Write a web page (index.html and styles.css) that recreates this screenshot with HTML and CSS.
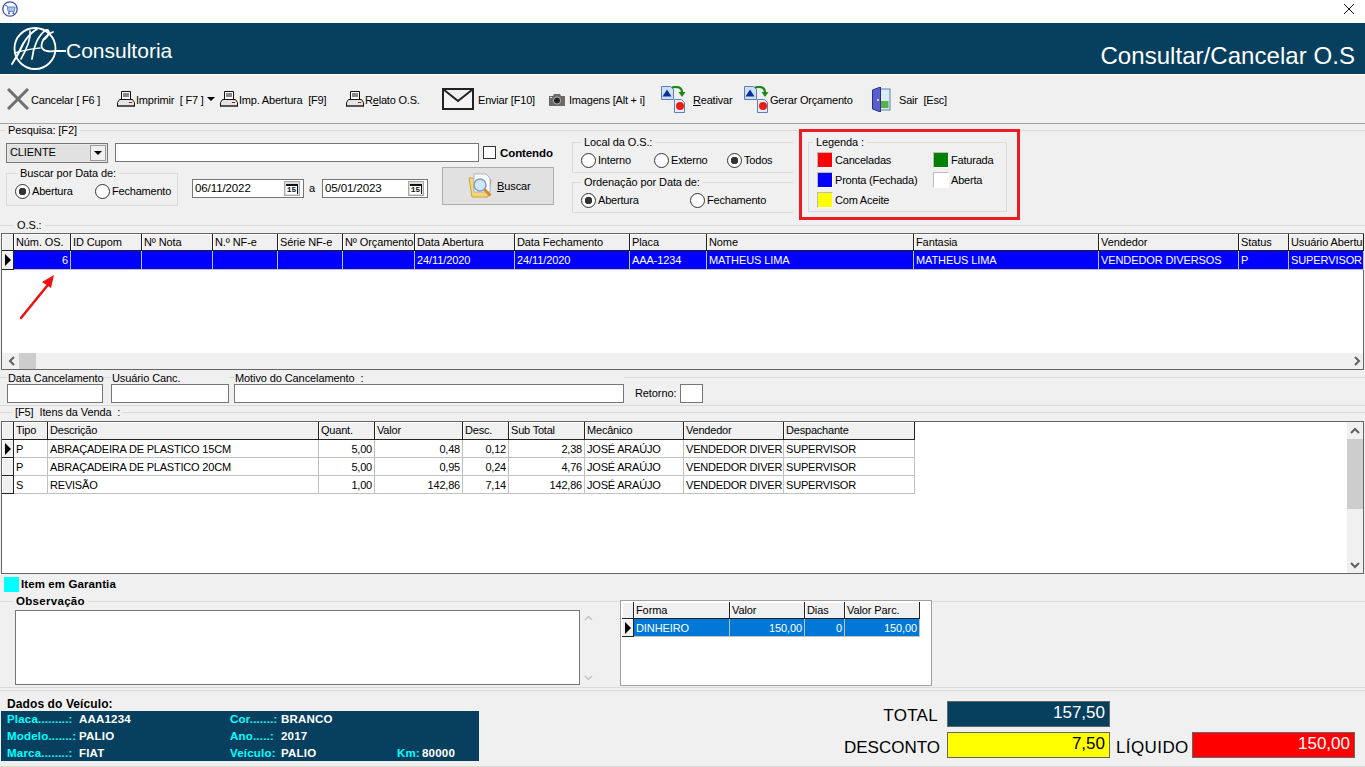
FILE: index.html
```html
<!DOCTYPE html>
<html lang="pt-BR">
<head>
<meta charset="utf-8">
<title>Consultar/Cancelar O.S</title>
<link rel="stylesheet" href="styles.css">
</head>
<body>
<div class="window">
  <div class="titlebar">
    <svg class="app-icon" width="16" height="16" viewBox="0 0 16 16"><circle cx="8" cy="8" r="7.2" fill="#fff" stroke="#3c4fa8" stroke-width="1.3"/><path d="M3 4.500h2l1.200 6h6l1-4.500H5.400" fill="#a9c4ee" stroke="#5f86cf"/><circle cx="7" cy="12.300" r="1" fill="#3c4fa8"/><circle cx="11.400" cy="12.300" r="1" fill="#3c4fa8"/></svg>
    <svg class="close-icon" width="12" height="12" viewBox="0 0 12 12"><path d="M1 1l10 10M11 1L1 11" stroke="#111" stroke-width="1" fill="none"/></svg>
  </div>
  <header class="banner">
    <div class="brand">
      <svg class="logo" width="56" height="46" viewBox="0 0 56 46" fill="none" stroke="#fff" stroke-linecap="round"><circle cx="25" cy="22.500" r="20.500" stroke-width="1.800"/><path d="M2 38 C6 32 10 25 13 18 C17 11 22 6 27 3" stroke-width="2"/><path d="M20 5 C21 13 15 26 11 33" stroke-width="1.600"/><path d="M5 27 C13 24 22 23 30 22" stroke-width="1.400"/><path d="M22 33 C23 22 28 9 36 4 C41 3 39 11 33 14" stroke-width="1.800"/><path d="M43 6 C35 9 30 17 32 22 C35 27 42 25 47 25 L56 25" stroke-width="1.800"/></svg>
      <span class="brand-name">Consultoria</span>
    </div>
    <div class="page-title">Consultar/Cancelar O.S</div>
  </header>

  <nav class="toolbar">
    <div class="tool"><svg width="22" height="22" viewBox="0 0 22 22"><path d="M1 1l20 20M21 1L1 21" stroke="#6f6f6f" stroke-width="3" fill="none"/></svg><span>Cancelar [ F6 ]</span></div>
    <div class="tool tool-print"><svg width="18" height="17" viewBox="0 0 18 17"><use href="#printer"/></svg><span>Imprimir&nbsp; [ F7 ]</span><i class="caret"></i></div>
    <div class="tool tool-print"><svg width="18" height="17" viewBox="0 0 18 17"><use href="#printer"/></svg><span>Imp. Abertura&nbsp; [F9]</span></div>
    <div class="tool tool-print"><svg width="18" height="17" viewBox="0 0 18 17"><use href="#printer"/></svg><span>R<u>e</u>lato O.S.</span></div>
    <div class="tool tool-mail"><svg width="32" height="22" viewBox="0 0 32 22"><path d="M1 1h30v20H1zM1.500 1.500L16 13 30.500 1.500" fill="#f4f4f4" stroke="#222" stroke-width="2"/></svg><span>Enviar [F10]</span></div>
    <div class="tool tool-cam"><svg width="16" height="13" viewBox="0 0 16 13"><path d="M0 3h4l1-2h6l1 2h4v10H0z" fill="#6a6a6a"/><circle cx="8" cy="7.500" r="3.600" fill="#222" stroke="#bbb"/><rect x="1" y="4" width="2" height="1" fill="#ddd"/></svg><span>Imagens [Alt + i]</span></div>
    <div class="tool tool-doc"><svg width="25" height="27" viewBox="0 0 25 27"><use href="#docs"/></svg><span><u>R</u>eativar</span></div>
    <div class="tool tool-gerar"><svg width="25" height="27" viewBox="0 0 25 27"><use href="#docs"/></svg><span>Gerar Orçamento</span></div>
    <div class="tool tool-exit"><svg width="21" height="25" viewBox="0 0 21 25"><rect x="9" y="2" width="11" height="21" fill="#d8ecf2" stroke="#5f7fa8"/><rect x="10.500" y="14" width="8" height="7" fill="#58b04a"/><path d="M2.500 3l8-3v25l-8-3z" fill="#5a5fd0" stroke="#2a2f80"/><circle cx="8" cy="13" r="0.900" fill="#fff"/></svg><span>Sair&nbsp; [Esc]</span></div>
  </nav>

  <svg class="defs" width="0" height="0">
    <defs>
      <g id="printer">
        <path d="M4.500 0.500h9v8h-9z" fill="#fff" stroke="#111"/><path d="M6 3h6M6 5h6" stroke="#111"/>
        <path d="M2.500 8.500h13l2 3v4h-17v-4z" fill="#e4e4e4" stroke="#111"/><rect x="1" y="14" width="16" height="2" fill="#555"/><rect x="12" y="11" width="3" height="1" fill="#d00"/>
      </g>
      <g id="docs">
        <path d="M0.500 0.500h9l3 3v10H0.500z" fill="#cfe0f5" stroke="#5c7fb8"/><path d="M1.500 10.500l4.500-7 4.500 7z" fill="#0c2f9e"/>
        <path d="M13.500 13.500h7l3 3v10h-10z" fill="#e4eefb" stroke="#5c7fb8"/><circle cx="19" cy="20" r="4" fill="#f01b0c"/>
        <path d="M11 1.500c6-1.500 10 0 10 5" stroke="#1a8a14" stroke-width="2.200" fill="none"/><path d="M17.500 6h7l-3.500 5z" fill="#1a8a14"/>
      </g>
    </defs>
  </svg>

  <fieldset class="group search">
    <legend>Pesquisa: [F2]</legend>
    <div class="search-body">
      <div class="search-main">
        <div class="search-line">
          <div class="combo"><span class="combo-text">CLIENTE</span><span class="combo-btn"><i class="caret"></i></span></div>
          <div class="field search-input"></div>
          <span class="check"></span><b class="contendo">Contendo</b>
        </div>
        <div class="search-line2">
          <fieldset class="box box-data">
            <legend>Buscar por Data de:</legend>
            <div class="radios radios-data">
              <label class="radio on">Abertura</label>
              <label class="radio">Fechamento</label>
            </div>
          </fieldset>
          <div class="date field"><span>06/11/2022</span><span class="cal"><b>15</b></span></div>
          <span class="date-sep">a</span>
          <div class="date date2 field"><span>05/01/2023</span><span class="cal"><b>15</b></span></div>
          <div class="btn-buscar">
            <svg width="28" height="28" viewBox="0 0 28 28"><path d="M2 6h8l2 2h12l-3 17H5z" fill="#f5d778" stroke="#c9a238"/><path d="M7 2h12l4 4v14H7z" fill="#fff" stroke="#9fb5cf"/><circle cx="13" cy="13" r="6" fill="#cfe6f7" stroke="#7f9fc0" stroke-width="1.500"/><path d="M17.500 17.500l6 6" stroke="#d8892f" stroke-width="3"/></svg>
            <span><u>B</u>uscar</span>
          </div>
        </div>
      </div>
      <div class="search-options">
        <fieldset class="box box-opt">
          <legend>Local da O.S.:</legend>
          <div class="radios radios-local">
            <label class="radio">Interno</label>
            <label class="radio">Externo</label>
            <label class="radio on">Todos</label>
          </div>
        </fieldset>
        <fieldset class="box box-opt box-ord">
          <legend>Ordenação por Data de:</legend>
          <div class="radios radios-ord">
            <label class="radio on">Abertura</label>
            <label class="radio">Fechamento</label>
          </div>
        </fieldset>
      </div>
      <div class="highlight">
        <fieldset class="box box-legend">
          <legend>Legenda :</legend>
          <div class="legend-grid">
            <div class="legend-item"><i class="swatch s-red"></i>Canceladas</div>
            <div class="legend-item"><i class="swatch s-green"></i>Faturada</div>
            <div class="legend-item"><i class="swatch s-blue"></i>Pronta (Fechada)</div>
            <div class="legend-item"><i class="swatch s-white"></i>Aberta</div>
            <div class="legend-item"><i class="swatch s-yellow"></i>Com Aceite</div>
          </div>
        </fieldset>
      </div>
    </div>
  </fieldset>

  <fieldset class="group os">
    <legend>O.S.:</legend>
    <div class="grid os-grid">
      <div class="row os-cols head">
        <div class="hc"></div><div class="hc">Núm. OS.</div><div class="hc">ID Cupom</div><div class="hc">Nº Nota</div><div class="hc">N.º NF-e</div><div class="hc">Série NF-e</div><div class="hc">Nº Orçamento</div><div class="hc">Data Abertura</div><div class="hc">Data Fechamento</div><div class="hc">Placa</div><div class="hc">Nome</div><div class="hc">Fantasia</div><div class="hc">Vendedor</div><div class="hc">Status</div><div class="hc">Usuário Abertura</div>
      </div>
      <div class="row os-cols sel blue">
        <div class="hc ind"><i class="tri"></i></div><div class="c r">6</div><div class="c"></div><div class="c"></div><div class="c"></div><div class="c"></div><div class="c"></div><div class="c">24/11/2020</div><div class="c">24/11/2020</div><div class="c">AAA-1234</div><div class="c">MATHEUS LIMA</div><div class="c">MATHEUS LIMA</div><div class="c">VENDEDOR DIVERSOS</div><div class="c">P</div><div class="c">SUPERVISOR</div>
      </div>
      <div class="grid-fill"></div>
      <div class="hscroll">
        <svg width="8" height="10" viewBox="0 0 8 10"><path d="M6 1L2 5l4 4" stroke="#606060" stroke-width="2" fill="none"/></svg>
        <i class="hthumb"></i>
        <svg class="hright" width="8" height="10" viewBox="0 0 8 10"><path d="M2 1l4 4-4 4" stroke="#606060" stroke-width="2" fill="none"/></svg>
      </div>
      <svg class="red-arrow" width="40" height="46" viewBox="0 0 40 46"><path d="M1 43L27 11" stroke="#f01010" stroke-width="2.500" stroke-linecap="round"/><path d="M34 0L31 13 22 7z" fill="#f01010"/></svg>
    </div>
  </fieldset>

  <section class="cancel">
    <div class="cf cf-data"><label>Data Cancelamento</label><div class="field"></div></div>
    <div class="cf cf-user"><label>Usuário Canc.</label><div class="field"></div></div>
    <div class="cf cf-motivo"><label>Motivo do Cancelamento&nbsp; :</label><div class="field"></div></div>
    <span class="retorno">Retorno:</span>
    <div class="field retorno-box"></div>
  </section>

  <fieldset class="group items">
    <legend>[F5]&nbsp; Itens da Venda&nbsp; :</legend>
    <div class="grid items-grid">
      <div class="items-table">
        <div class="row it-cols head">
          <div class="hc"></div><div class="hc">Tipo</div><div class="hc">Descrição</div><div class="hc">Quant.</div><div class="hc">Valor</div><div class="hc">Desc.</div><div class="hc">Sub Total</div><div class="hc">Mecânico</div><div class="hc">Vendedor</div><div class="hc">Despachante</div>
        </div>
        <div class="row it-cols line">
          <div class="hc ind"><i class="tri"></i></div><div class="c">P</div><div class="c">ABRAÇADEIRA DE PLASTICO 15CM</div><div class="c r">5,00</div><div class="c r">0,48</div><div class="c r">0,12</div><div class="c r">2,38</div><div class="c">JOSÉ ARAÚJO</div><div class="c">VENDEDOR DIVER</div><div class="c">SUPERVISOR</div>
        </div>
        <div class="row it-cols line">
          <div class="hc ind"></div><div class="c">P</div><div class="c">ABRAÇADEIRA DE PLASTICO 20CM</div><div class="c r">5,00</div><div class="c r">0,95</div><div class="c r">0,24</div><div class="c r">4,76</div><div class="c">JOSÉ ARAÚJO</div><div class="c">VENDEDOR DIVER</div><div class="c">SUPERVISOR</div>
        </div>
        <div class="row it-cols line">
          <div class="hc ind"></div><div class="c">S</div><div class="c">REVISÃO</div><div class="c r">1,00</div><div class="c r">142,86</div><div class="c r">7,14</div><div class="c r">142,86</div><div class="c">JOSÉ ARAÚJO</div><div class="c">VENDEDOR DIVER</div><div class="c">SUPERVISOR</div>
        </div>
      </div>
      <div class="vscroll">
        <svg width="10" height="8" viewBox="0 0 10 8"><path d="M1 6l4-4 4 4" stroke="#606060" stroke-width="2" fill="none"/></svg>
        <i class="vthumb"></i>
        <svg class="vdown" width="10" height="8" viewBox="0 0 10 8"><path d="M1 2l4 4 4-4" stroke="#606060" stroke-width="2" fill="none"/></svg>
      </div>
    </div>
  </fieldset>

  <div class="garantia"><i class="swatch-cyan"></i><b>Item em Garantia</b></div>

  <fieldset class="group obs">
    <legend>Observação</legend>
    <div class="obs-body">
      <div class="field obs-text"></div>
      <div class="obs-scroll">
        <svg width="9" height="7" viewBox="0 0 9 7"><path d="M1 5l3.500-3.500L8 5" stroke="#c4c4c4" stroke-width="1.500" fill="none"/></svg>
        <svg width="9" height="7" viewBox="0 0 9 7"><path d="M1 2l3.500 3.500L8 2" stroke="#c4c4c4" stroke-width="1.500" fill="none"/></svg>
      </div>
      <div class="pay">
        <div class="row pay-cols head">
          <div class="hc"></div><div class="hc">Forma</div><div class="hc">Valor</div><div class="hc">Dias</div><div class="hc">Valor Parc.</div>
        </div>
        <div class="row pay-cols sel azure">
          <div class="hc ind"><i class="tri"></i></div><div class="c">DINHEIRO</div><div class="c r">150,00</div><div class="c r">0</div><div class="c r">150,00</div>
        </div>
      </div>
    </div>
  </fieldset>

  <footer class="bottom">
    <div class="vehicle">
      <b class="vehicle-title">Dados do Veículo:</b>
      <div class="vehicle-box">
        <span class="k">Placa.........:</span><span class="v">AAA1234</span><span class="k">Cor.......:</span><span class="v">BRANCO</span><span></span><span></span>
        <span class="k">Modelo.......:</span><span class="v">PALIO</span><span class="k">Ano.....:</span><span class="v">2017</span><span></span><span></span>
        <span class="k">Marca........:</span><span class="v">FIAT</span><span class="k">Veículo:</span><span class="v">PALIO</span><span class="k">Km:</span><span class="v">80000</span>
      </div>
    </div>
    <div class="totals">
      <span class="t-label t-total">TOTAL</span><div class="t-val navy">157,50</div><span></span><span></span>
      <span class="t-label t-desc">DESCONTO</span><div class="t-val yellow">7,50</div><span class="t-label t-liq">LÍQUIDO</span><div class="t-val red">150,00</div>
    </div>
  </footer>
</div>
</body>
</html>
```
FILE: styles.css
```css
* { box-sizing: border-box; }
html, body { margin: 0; padding: 0; }
body { width: 1365px; height: 767px; overflow: hidden; background: #f0f0f0; color: #000; font: 11px/13px "Liberation Sans", Arial, sans-serif; letter-spacing: -0.1px; }
.window { display: flex; flex-direction: column; width: 1365px; height: 767px; overflow: hidden; }
.defs { display: block; height: 0; }
u { text-decoration: underline; }

.titlebar { display: flex; align-items: center; justify-content: space-between; height: 23px; padding: 0 10px 5px 2px; background: #fff; flex: none; }
.banner { display: flex; justify-content: space-between; height: 52px; background: #073f5e; border-bottom: 1px solid #fff; color: #fff; padding: 0 10px 0 10px; flex: none; letter-spacing: 0; }
.brand { display: flex; align-items: center; }
.brand-name { font-size: 21px; line-height: 24px; margin-top: 5px; }
.page-title { font-size: 24px; line-height: 28px; margin-top: 19px; letter-spacing: 0.05px; }

.toolbar { display: grid; grid-template-columns: 110px 103px 126px 96px 107px 112px 83px 126px 90px; height: 49px; padding-left: 7px; border-bottom: 1px solid #a0a0a0; flex: none; align-items: center; letter-spacing: -0.2px; }
.tool { display: flex; align-items: center; gap: 2px; white-space: nowrap; }
.tool span { padding-top: 2px; }
.tool-print { gap: 1px; }
.tool-mail { gap: 4px; }
.tool-cam { gap: 4px; }
.tool-doc { gap: 7px; }
.tool-gerar { gap: 1px; }
.tool-exit { gap: 8px; }
.caret { display: inline-block; width: 0; height: 0; border-left: 4px solid transparent; border-right: 4px solid transparent; border-top: 4px solid #000; margin-left: 2px; }

fieldset { margin: 0; padding: 0; min-width: 0; }
.group { border: 0; border-top: 1px solid #dadada; flex: none; }
.group > legend { margin-left: 5px; padding: 0 3px; height: 13px; }
.box { border: 1px solid #dadada; }
.box > legend { padding: 0 3px; height: 13px; margin-left: 8px; }

.search { height: 94px; }
.search-body { display: flex; padding-left: 6px; }
.search-main { width: 549px; padding-top: 6px; flex: none; }
.search-line { display: flex; align-items: center; height: 19px; }
.combo { display: flex; justify-content: space-between; width: 102px; height: 20px; background: #e1e1e1; border: 1px solid #767676; box-shadow: inset 0 0 0 1px #e8e8e8; padding-left: 3px; align-items: center; }
.combo-btn { display: flex; align-items: center; justify-content: center; width: 16px; height: 16px; background: #efefef; border: 1px solid #9a9a9a; margin-right: 1px; }
.combo-btn .caret { margin: 0; }
.field { background: #fff; border: 1px solid #767676; }
.search-input { width: 364px; height: 19px; margin-left: 7px; }
.check { width: 13px; height: 13px; border: 1px solid #333; background: #fff; margin-left: 4px; }
.contendo { margin: 1px 0 0 4px; font-size: 11.500px; }
.search-line2 { display: flex; align-items: flex-start; margin-top: 5px; }
.box-data { width: 172px; height: 39px; }
.box-data > legend { margin-left: 10px; }
.radios { display: grid; }
.radios-data { grid-template-columns: 80px auto; padding: 4px 0 0 8px; }
.radio { display: flex; align-items: center; gap: 2px; white-space: nowrap; height: 14px; letter-spacing: -0.2px; }
.radio::before { content: ""; width: 13px; height: 13px; border-radius: 50%; border: 1px solid #333; background: #fff; flex: none; }
.radio.on::before { background: radial-gradient(circle, #333 0 3.500px, #fff 4px); }
.date { display: flex; align-items: center; justify-content: space-between; width: 112px; height: 19px; margin: 12px 0 0 14px; padding: 0 3px 0 2px; font-size: 11.500px; }
.date2 { width: 106px; margin-left: 0; }
.date-sep { margin: 15px 7px 0 5px; }
.cal { display: flex; align-items: center; justify-content: center; width: 16px; height: 15px; background: #dcdcdc; border: 1px solid #a8a8a8; }
.cal b { border-top: 2px solid #111; border-right: 1px solid #111; font: bold 8px/8px "Liberation Mono", monospace; color: #111; padding: 0 1px; background: #fff; }
.btn-buscar { display: flex; align-items: center; gap: 2px; width: 112px; height: 38px; margin-left: 14px; padding-left: 24px; background: #e1e1e1; border: 1px solid #adadad; }

.search-options { width: 218px; margin: -1px 0 0 17px; flex: none; }
.box-opt { width: 221px; height: 37px; border-right: 0; }
.box-ord { margin-top: 3px; }
.radios-local { grid-template-columns: 73px 73px auto; padding: 4px 0 0 8px; }
.radios-ord { grid-template-columns: 109px auto; padding: 4px 0 0 8px; }

.highlight { width: 221px; height: 91px; margin: -8px 0 0 9px; padding: 4px 0 0 6px; border: 3px solid #ed1c24; flex: none; }
.box-legend { width: 199px; height: 76px; }
.box-legend > legend { margin-left: 4px; }
.legend-grid { display: grid; grid-template-columns: 116px auto; grid-auto-rows: 20px; padding: 1px 0 0 8px; }
.legend-item { display: flex; align-items: center; gap: 2px; white-space: nowrap; letter-spacing: -0.2px; }
.swatch { width: 16px; height: 16px; border: 1px solid; border-color: #bbb #fff #fff #bbb; flex: none; }
.s-red { background: #f00; }
.s-green { background: #008000; }
.s-blue { background: #00f; }
.s-white { background: #fff; }
.s-yellow { background: #ff0; }

.os { height: 152px; margin-top: 1px; }
.os > legend { margin-left: 14px; }
.grid { display: flex; flex-direction: column; position: relative; margin: 1px 1px 0; border: 1px solid #666; background: #fff; height: 137px; }
.row { display: grid; flex: none; }
.os-cols { grid-template-columns: 12px 57px 71px 71px 65px 65px 72px 100px 115px 77px 207px 185px 140px 50px 75px; }
.head { height: 17px; }
.hc { background: #f0f0f0; border-right: 1px solid #222; border-bottom: 1px solid #222; box-shadow: inset 1px 1px #fff; padding: 2px 2px 0; white-space: nowrap; overflow: hidden; }
.ind { display: flex; align-items: center; justify-content: center; padding: 0; }
.tri { width: 0; height: 0; border-top: 6px solid transparent; border-bottom: 6px solid transparent; border-left: 6px solid #000; }
.c { padding: 3px 2px 0; border-right: 1px solid #c0c0c0; border-bottom: 1px solid #c0c0c0; white-space: nowrap; overflow: hidden; }
.r { text-align: right; }
.sel { height: 19px; color: #fff; }
.blue .c { background: #00f; }
.azure .c { background: #0078d7; }
.grid-fill { flex: 1; }
.hscroll { display: flex; align-items: center; height: 16px; background: #f0f0f0; padding-left: 6px; flex: none; }
.hthumb { width: 17px; height: 16px; background: #cdcdcd; margin-left: 3px; }
.hright { margin-left: auto; margin-right: 2px; }
.red-arrow { position: absolute; left: 18px; top: 41px; }

.cancel { display: flex; align-items: flex-start; height: 29px; margin-top: 6px; border-top: 1px solid #dadada; border-bottom: 1px solid #dadada; padding-left: 7px; flex: none; }
.cf { display: flex; flex-direction: column; margin-top: -7px; }
.cf label { height: 13px; padding: 1px 0 0 1px; white-space: nowrap; background: #f0f0f0; }
.cf .field { height: 19px; }
.cf-data { width: 96px; }
.cf-user { width: 118px; margin-left: 8px; }
.cf-motivo { width: 390px; margin-left: 5px; }
.retorno { margin: 9px 0 0 11px; }
.retorno-box { width: 23px; height: 19px; margin: 6px 0 0 4px; }

.items { height: 168px; }
.items > legend { margin-left: 12px; }
.items-grid { height: 153px; margin-top: 2px; flex-direction: row; letter-spacing: -0.2px; }
.items-table { flex: 1; display: flex; flex-direction: column; }
.it-cols { grid-template-columns: 12px 34px 271px 56px 88px 46px 76px 99px 100px 131px; width: 913px; }
.line { height: 18px; }
.it-cols.head { height: 18px; }
.vscroll { display: flex; flex-direction: column; align-items: center; width: 16px; background: #f0f0f0; padding-top: 5px; flex: none; }
.vthumb { width: 16px; height: 70px; background: #cdcdcd; margin-top: 4px; }
.vdown { margin-top: auto; margin-bottom: 4px; }

.garantia { display: flex; align-items: center; gap: 2px; height: 21px; padding-left: 4px; flex: none; font-size: 11.500px; letter-spacing: 0.1px; }
.swatch-cyan { width: 15px; height: 15px; background: #0ff; }

.obs { height: 93px; border-bottom: 1px solid #dadada; }
.obs > legend { margin-left: 13px; font-weight: bold; font-size: 11.500px; letter-spacing: 0.3px; }
.obs-body { display: flex; padding-left: 15px; }
.obs-text { width: 565px; height: 75px; margin-top: 2px; }
.obs-scroll { display: flex; flex-direction: column; justify-content: space-between; width: 40px; height: 66px; margin-top: 7px; padding-left: 4px; }
.pay { width: 312px; height: 86px; margin-top: -8px; background: #fff; border: 1px solid #a0a0a0; padding: 1px 0 0 1px; }
.pay-cols { grid-template-columns: 12px 96px 75px 40px 75px; }
.pay .sel { height: 18px; }

.bottom { display: flex; flex: 1; margin-top: 2px; border-top: 1px solid #dadada; border-bottom: 1px solid #dadada; padding-top: 7px; }
.vehicle { margin-left: 1px; width: 478px; flex: none; }
.vehicle-title { display: block; padding-left: 6px; height: 13px; font-size: 12px; letter-spacing: 0.1px; }
.vehicle-box { display: grid; grid-template-columns: 72px 151px 51px 116px 25px auto; grid-auto-rows: 17px; align-content: start; height: 50px; padding: 2px 0 0 6px; background: #073f5e; font-size: 11.500px; font-weight: bold; white-space: nowrap; }
.k { color: #0ff; letter-spacing: 0.2px; }
.v { color: #fff; letter-spacing: 0.2px; }
.totals { display: grid; grid-template-columns: 106px 163px 82px 163px; grid-auto-rows: 26px; row-gap: 5px; margin: 3px 0 0 auto; padding-right: 10px; font-size: 17px; line-height: 26px; letter-spacing: 0; }
.t-label { text-align: right; white-space: nowrap; }
.t-total { padding: 2px 9px 0 0; letter-spacing: 0.3px; }
.t-desc { padding: 3px 7px 0 0; }
.t-liq { text-align: left; padding: 3px 0 0 6px; letter-spacing: 0.4px; }
.t-val { text-align: right; padding-right: 4px; border: 1px solid #666; line-height: 22px; }
.navy { background: #073f5e; color: #fff; }
.yellow { background: #ff0; }
.red { background: #f00; color: #fff; }
```
